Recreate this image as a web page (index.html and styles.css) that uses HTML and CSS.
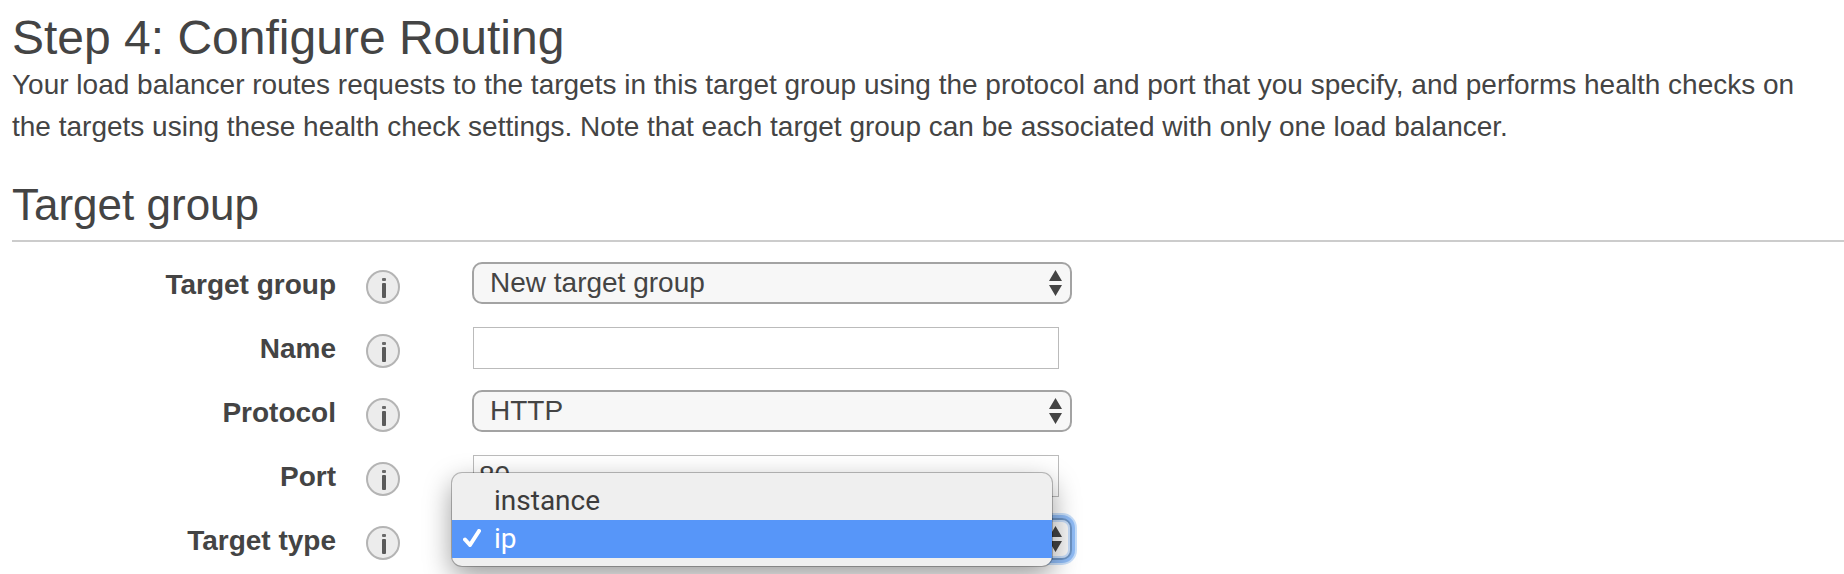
FILE: index.html
```
<!DOCTYPE html>
<html lang="en">
<head>
  <meta charset="utf-8" />
  <meta name="viewport" content="width=device-width, initial-scale=1" />
  <title>Step 4: Configure Routing</title>
  <link rel="stylesheet" href="styles.css">
</head>
<body>
  <!-- shared icons -->
  <svg class="sprite" aria-hidden="true">
    <symbol id="info" viewBox="0 0 34 34">
      <circle cx="17" cy="17" r="16" fill="#ececec" stroke="#b4b4b4" stroke-width="2"/>
      <rect x="16" y="8" width="4" height="3" rx="1" fill="#6a6a6a"/>
      <rect x="16" y="13" width="4" height="15" rx="1" fill="#5a5a5a"/>
    </symbol>
    <symbol id="arrows" viewBox="0 0 13 26">
      <path d="M6.500 0L13 11H0zM0 15h13L6.500 26z" fill="#444"/>
    </symbol>
  </svg>

  <main class="wizard">
    <h1>Step 4: Configure Routing</h1>
    <p class="intro">Your load balancer routes requests to the targets in this target group using the protocol and port that you specify, and performs health checks on the targets using these health check settings. Note that each target group can be associated with only one load balancer.</p>

    <h2>Target group</h2>

    <form class="form">
      <div class="row">
        <label for="group">Target group</label>
        <button class="info" type="button" aria-label="About target group"><svg><use href="#info"/></svg></button>
        <div class="field">
          <select id="group"><option>New target group</option></select>
          <svg class="arrows"><use href="#arrows"/></svg>
        </div>
      </div>

      <div class="row">
        <label for="name">Name</label>
        <button class="info" type="button" aria-label="About name"><svg><use href="#info"/></svg></button>
        <div class="field"><input id="name" type="text"></div>
      </div>

      <div class="row">
        <label for="protocol">Protocol</label>
        <button class="info" type="button" aria-label="About protocol"><svg><use href="#info"/></svg></button>
        <div class="field">
          <select id="protocol"><option>HTTP</option></select>
          <svg class="arrows"><use href="#arrows"/></svg>
        </div>
      </div>

      <div class="row">
        <label for="port">Port</label>
        <button class="info" type="button" aria-label="About port"><svg><use href="#info"/></svg></button>
        <div class="field"><input id="port" type="text" value="80"></div>
      </div>

      <div class="row">
        <label for="type">Target type</label>
        <button class="info" type="button" aria-label="About target type"><svg><use href="#info"/></svg></button>
        <div class="field">
          <select id="type" class="focused">
            <option>instance</option>
            <option selected>ip</option>
          </select>
          <svg class="arrows"><use href="#arrows"/></svg>
          <ul class="menu" role="listbox" aria-label="Target type">
            <li role="option" aria-selected="false">instance</li>
            <li class="selected" role="option" aria-selected="true">
              <svg class="check" viewBox="0 0 18 18"><path d="M2 10.500L7 16L16 2" fill="none" stroke="#fff" stroke-width="4" stroke-linecap="round" stroke-linejoin="round"/></svg>ip</li>
          </ul>
        </div>
      </div>
    </form>
  </main>
</body>
</html>
```

FILE: styles.css
```
:root{
  --text: #444;
  --rule: #ccc;
  --field: #bbb;
  --select: #a3a3a3;
  --highlight: #5796f9;
}
*{ box-sizing: border-box; }
body{
  margin: 0; min-height: 100vh;
  background: #fff;
  color: var(--text);
  font: 28px/42px "Liberation Sans", Helvetica, Arial, sans-serif;
}
.sprite{ display: none; }

.wizard{ padding: 12px 0 0 12px; }
h1, h2{ margin: 0; font-weight: 400; }
h1{ font-size: 48px; line-height: 52px; }
.intro{ margin: 0; padding-right: 20px; }
h2{
  margin-top: 30px; padding-bottom: 8px;
  font-size: 44px; line-height: 54px;
  border-bottom: 2px solid var(--rule);
}

.form{ margin-top: 20px; display: grid; gap: 20px; }
.row{
  display: grid; grid-template-columns: 324px 34px 600px; column-gap: 30px;
  height: 44px; align-items: start;
}
.row label{ font-weight: 700; line-height: 46px; text-align: right; }
.info{
  width: 34px; height: 34px; margin-top: 8px; padding: 0;
  border: 0; background: none; cursor: pointer;
}
.info svg{ display: block; width: 34px; height: 34px; }

.field{ position: relative; margin-left: 42px; width: 600px; }
.field select, .field input{
  display: block; height: 42px; margin: 0;
  font: inherit; color: inherit; outline: 0;
}
.field select{
  width: 100%; padding: 0 40px 0 16px; appearance: none;
  line-height: 38px;
  background: #f7f7f7; border: 2px solid var(--select); border-radius: 10px;
}
.field input{
  width: 586px; margin: 1px 0 0 1px; padding: 0 5px;
  background: #fff; border: 1px solid var(--field); border-radius: 0;
}
.field select.focused{
  border-color: #6d94c4;
  box-shadow: inset 0 0 0 2px #c5dbf7, 0 0 0 3px #8fbbf5, 0 0 0 5px #c8dffa;
}
.arrows{
  position: absolute; top: 8px; right: 10px; width: 13px; height: 26px;
  pointer-events: none;
}

.menu{
  position: absolute; top: -45px; left: -20px; width: 600px;
  margin: 0; padding: 9px 0 8px; list-style: none;
  font-family: Roboto, "Liberation Sans", sans-serif; line-height: 38px; color: #3c3c3c;
  background: #efefef; border-radius: 10px;
  box-shadow: 0 0 0 1px rgba(0,0,0,.25), 0 10px 28px rgba(0,0,0,.4);
}
.menu li{ position: relative; padding-left: 42px; }
.menu .selected{ background: var(--highlight); color: #fff; }
.check{ position: absolute; left: 11px; top: 9px; width: 18px; height: 18px; }
```
